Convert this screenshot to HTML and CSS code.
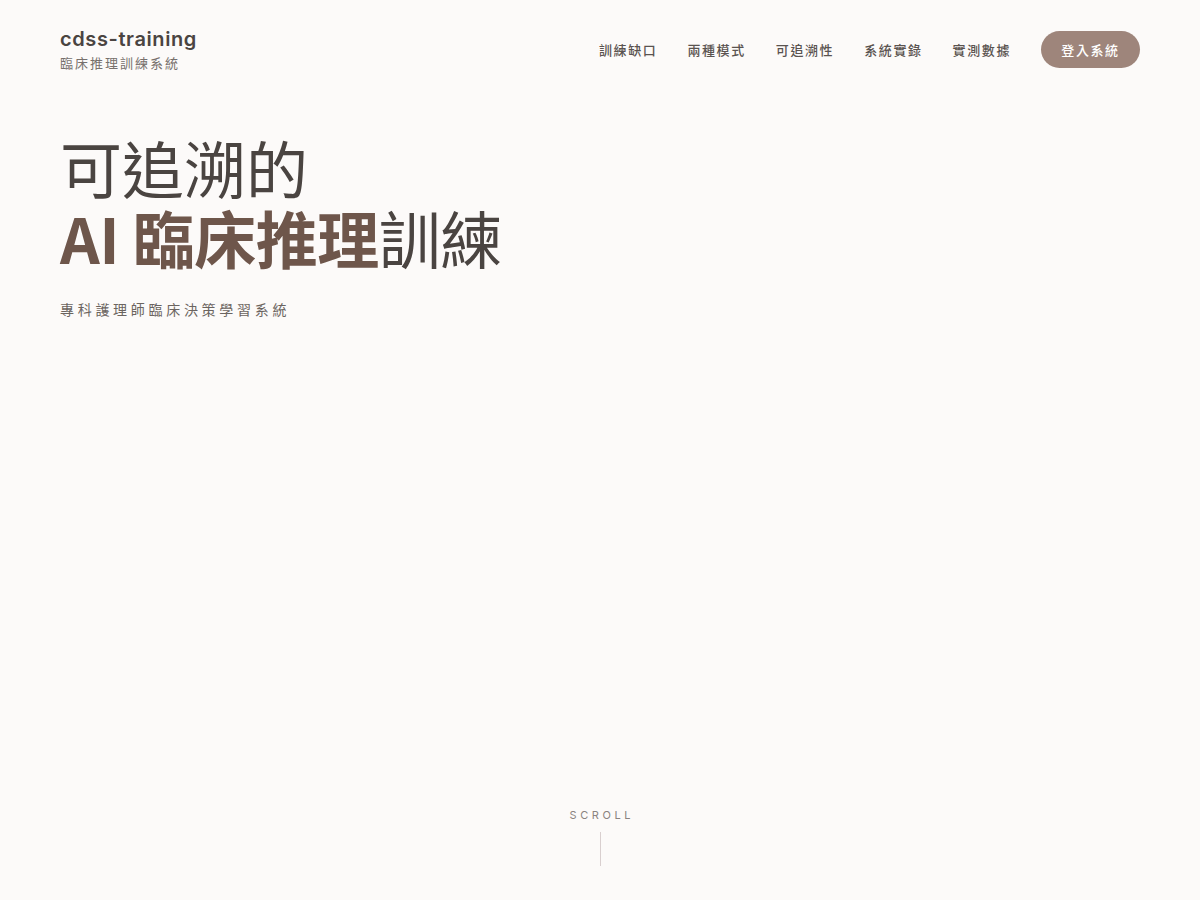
FILE: index.html
```html
<!DOCTYPE html>
<html lang="zh-Hant">
<head>
<meta charset="utf-8">
<title>cdss-training</title>
<link rel="stylesheet" href="styles.css">
</head>
<body>
<header class="header">
  <div class="brand">
    <div class="brand-name">cdss-training</div>
    <div class="brand-sub">臨床推理訓練系統</div>
  </div>
  <nav class="nav">
    <a class="nav-link" href="#">訓練缺口</a>
    <a class="nav-link" href="#">兩種模式</a>
    <a class="nav-link" href="#">可追溯性</a>
    <a class="nav-link" href="#">系統實錄</a>
    <a class="nav-link" href="#">實測數據</a>
    <a class="nav-btn" href="#">登入系統</a>
  </nav>
</header>
<main class="hero">
  <h1 class="hero-title">
    <span class="line">可追溯的</span>
    <span class="line line-2"><strong class="accent">AI 臨床推理</strong>訓練</span>
  </h1>
  <p class="hero-sub">專科護理師臨床決策學習系統</p>
</main>
<div class="scroll">
  <span class="scroll-text">SCROLL</span>
  <span class="scroll-line"></span>
</div>
</body>
</html>
```
FILE: styles.css
```css
html, body {
  margin: 0;
  padding: 0;
}
body {
  width: 1200px;
  height: 900px;
  background: #fcfaf9;
  font-family: "Inter", "Noto Sans CJK TC", sans-serif;
  color: #4a4441;
  position: relative;
  overflow: hidden;
}
.header {
  display: flex;
  justify-content: space-between;
  align-items: center;
  padding: 26px 60px 0 60px;
}
.brand-name {
  font-size: 20px;
  font-weight: 600;
  letter-spacing: 0.6px;
  color: #4a4441;
  line-height: 26px;
}
.brand-sub {
  font-family: "Noto Sans CJK TC", sans-serif;
  font-size: 13px;
  letter-spacing: 2px;
  color: #77706c;
  line-height: 20px;
  margin-top: 1px;
}
.nav {
  display: flex;
  align-items: center;
  gap: 30px;
}
.nav-link {
  font-family: "Noto Sans CJK TC", sans-serif;
  font-size: 13px;
  font-weight: 500;
  letter-spacing: 1.6px;
  color: #5a5350;
  text-decoration: none;
}
.nav-btn {
  font-family: "Noto Sans CJK TC", sans-serif;
  font-size: 13px;
  font-weight: 500;
  letter-spacing: 1.6px;
  color: #ffffff;
  background: #9e857b;
  text-decoration: none;
  height: 37px;
  width: 99px;
  box-sizing: border-box;
  display: flex;
  align-items: center;
  justify-content: center;
  border-radius: 19px;
}
.hero {
  padding: 0 60px;
  margin-top: 59px;
}
.hero-title {
  margin: 0;
  font-family: "Noto Sans CJK TC", sans-serif;
  font-size: 62px;
  font-weight: 400;
  line-height: 70px;
  color: #4a4441;
}
.hero-title .line {
  display: block;
}
.line-2 {
  letter-spacing: -0.5px;
}
.accent {
  font-weight: 700;
  color: #6e564b;
}
.hero-sub {
  margin: 27px 0 0 0;
  font-family: "Noto Sans CJK TC", sans-serif;
  font-size: 14px;
  letter-spacing: 3.7px;
  color: #6b6460;
}
.scroll {
  position: absolute;
  left: 0;
  right: 0;
  top: 808px;
  display: flex;
  flex-direction: column;
  align-items: center;
  gap: 10px;
}
.scroll-text {
  font-family: "Inter", sans-serif;
  font-size: 11px;
  letter-spacing: 3.6px;
  color: #8a8380;
  padding-left: 3.6px;
}
.scroll-line {
  width: 1px;
  height: 34px;
  background: #d9cfcf;
}
```
